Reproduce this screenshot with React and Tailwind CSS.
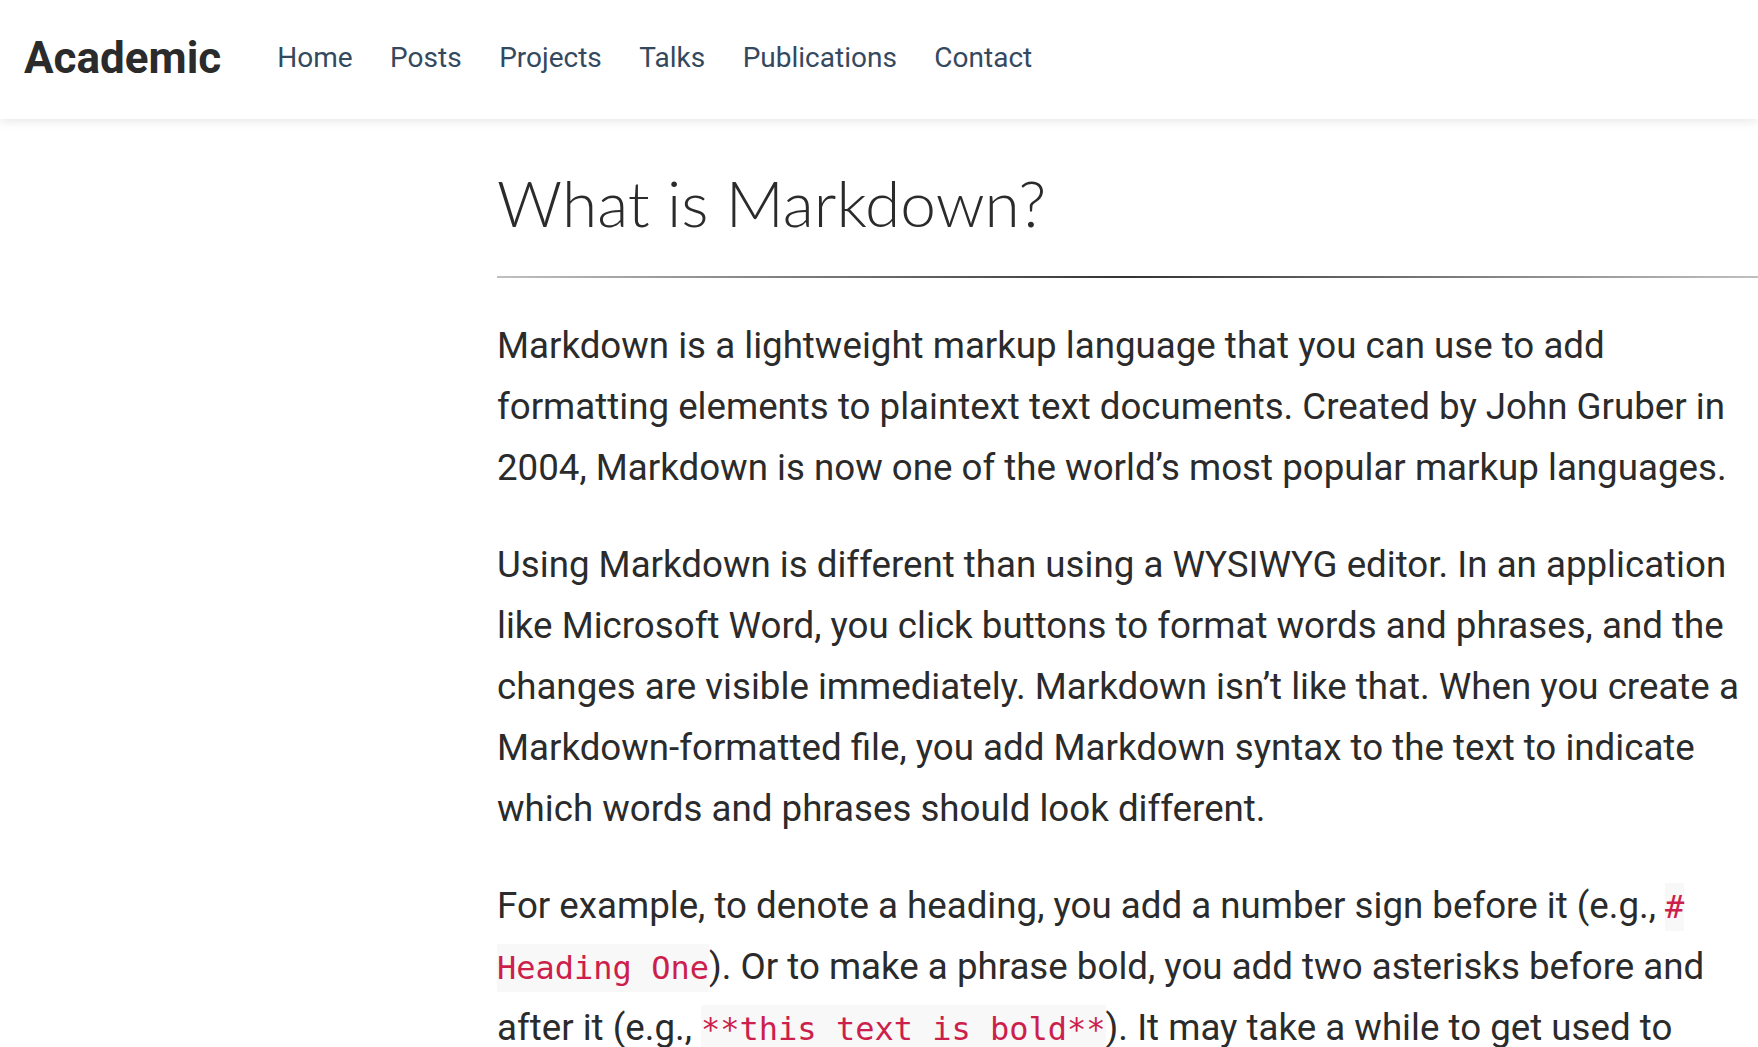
import React from "react";

const links = ["Home", "Posts", "Projects", "Talks", "Publications", "Contact"];

const Code = ({ children }) => (
  <code className="bg-[#f8f8f8] px-0 text-[#cc1f4c] text-[32px] font-['DejaVu_Sans_Mono',monospace] leading-none py-[5px]">
    {children}
  </code>
);

export default function App() {
  return (
    <div className="min-h-screen bg-white font-['Roboto',sans-serif] overflow-hidden">
      <nav className="h-[119px] flex items-center pb-[4px] px-[24px] bg-white shadow-[0_2px_10px_rgba(0,0,0,0.1)] relative">
        <a className="text-[44px] font-bold text-[#2b2b2b] mr-[56px]">
          Academic
        </a>
        <ul className="flex gap-[37.5px]">
          {links.map((l) => (
            <li key={l} className="text-[28px] text-[#34495e]">
              {l}
            </li>
          ))}
        </ul>
      </nav>

      <main className="pl-[497px] pt-[46px]">
        <h1 className="text-[64px] font-light text-[#2b2b2b] font-['Lato',sans-serif] leading-[1.2]">
          What is Markdown?
        </h1>
        <hr className="mt-[34px] h-[2px] border-0 bg-[linear-gradient(to_right,#c0c0c0,#333_50%,#c0c0c0)]" />

        <div className="text-[36.7px] leading-[61px] text-[#2b2b2b] pt-[37px] pr-[10px]">
          <p className="mb-[36px]">
            Markdown is a lightweight markup language that you can use to add
            formatting elements to plaintext text documents. Created by John
            Gruber in 2004, Markdown is now one of the world’s most popular
            markup languages.
          </p>
          <p className="mb-[36px]">
            Using Markdown is different than using a WYSIWYG editor. In an
            application like Microsoft Word, you click buttons to format words
            and phrases, and the changes are visible immediately. Markdown isn’t
            like that. When you create a Markdown-formatted file, you add
            Markdown syntax to the text to indicate which words and phrases
            should look different.
          </p>
          <p>
            For example, to denote a heading, you add a number sign before it
            (e.g., <Code># Heading One</Code>). Or to make a phrase bold, you
            add two asterisks before and after it (e.g.,{" "}
            <Code>**this text is bold**</Code>). It may take a while to get used
            to seeing Markdown syntax in your text, especially if you’re
            accustomed to WYSIWYG applications.
          </p>
        </div>
      </main>
    </div>
  );
}
